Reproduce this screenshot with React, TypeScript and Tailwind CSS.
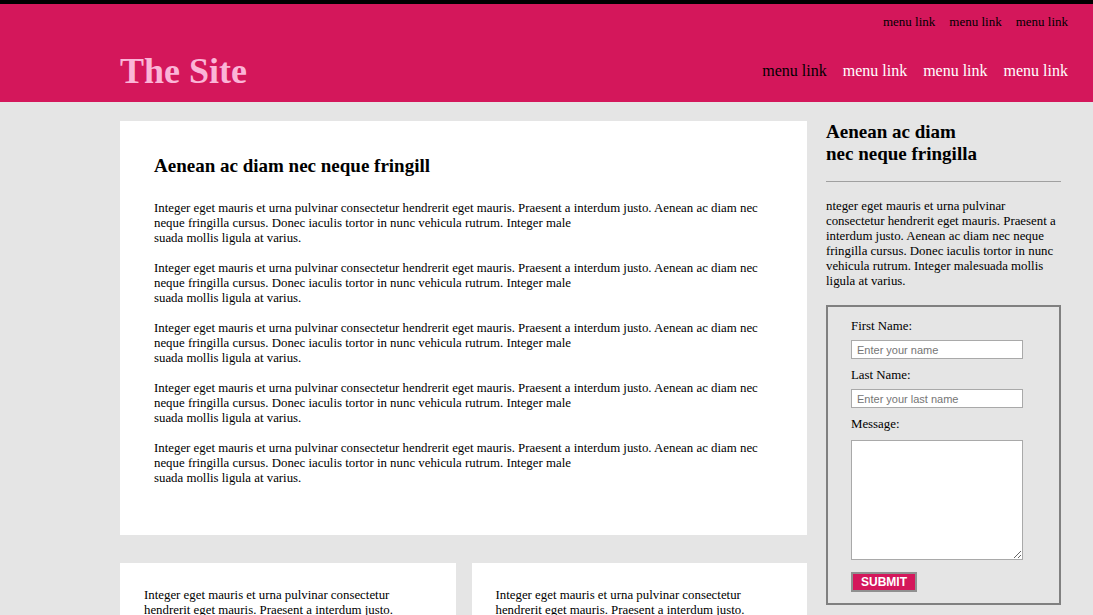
import React from "react";

const para = (
  <p className="mb-[15px]">
    Integer eget mauris et urna pulvinar consectetur hendrerit eget mauris. Praesent a interdum justo. Aenean ac diam nec
    <br />
    neque fringilla cursus. Donec iaculis tortor in nunc vehicula rutrum. Integer male
    <br />
    suada mollis ligula at varius.
  </p>
);

export default function App() {
  return (
    <div className="min-h-[615px] bg-[#e5e5e5] text-black font-['Liberation_Serif',serif]">
      <div className="h-[4px] bg-black" />
      <header className="h-[98px] bg-[#d4175b] pl-[120px] pr-[25px] flex flex-col">
        <nav className="flex justify-end gap-[14px] pt-[6px] text-[13px] leading-[24px]">
          <a>menu link</a>
          <a>menu link</a>
          <a>menu link</a>
        </nav>
        <div className="flex items-center justify-between mt-[17px] h-[40px]">
          <h1 className="text-[36px] leading-[40px] font-bold text-[#fbb5d7]">The Site</h1>
          <nav className="flex gap-[16px] text-[16px] leading-[20px] text-white">
            <a className="text-black">menu link</a>
            <a>menu link</a>
            <a>menu link</a>
            <a>menu link</a>
          </nav>
        </div>
      </header>
      <div className="flex gap-[19px] pl-[120px] pr-[32px] pt-[19px] text-[12.85px] leading-[15px]">
        <main className="w-[687px] flex flex-col gap-[28px]">
          <section className="bg-white px-[34px] pt-[34px] pb-[42px] h-[414px]">
            <h3 className="text-[19px] leading-[22px] font-bold mb-[24px]">Aenean ac diam nec neque fringill</h3>
            {para}
            {para}
            {para}
            {para}
            {para}
          </section>
          <div className="flex gap-[16px]">
            <section className="flex-1 bg-white px-[24px] pt-[25px] h-[100px]">
              <p>
                Integer eget mauris et urna pulvinar consectetur
                <br />
                hendrerit eget mauris. Praesent a interdum justo.
              </p>
            </section>
            <section className="flex-1 bg-white px-[24px] pt-[25px] h-[100px]">
              <p>
                Integer eget mauris et urna pulvinar consectetur
                <br />
                hendrerit eget mauris. Praesent a interdum justo.
              </p>
            </section>
          </div>
        </main>
        <aside className="w-[235px]">
          <h3 className="text-[19px] leading-[22px] font-bold">
            Aenean ac diam
            <br />
            nec neque fringilla
          </h3>
          <hr className="mt-[16px] border-t border-[#a0a0a0]" />
          <p className="mt-[17px]">
            nteger eget mauris et urna pulvinar consectetur hendrerit eget mauris. Praesent a interdum justo. Aenean ac diam nec neque fringilla cursus. Donec iaculis tortor in nunc vehicula rutrum. Integer malesuada mollis ligula at varius.
          </p>
          <form className="mt-[16px] border-2 border-[#808080] pl-[23px] pt-[9px] h-[300px] flex flex-col">
            <label className="leading-[20px]">First Name:</label>
            <input
              placeholder="Enter your name"
              className="mt-[4px] w-[172px] h-[19px] border border-[#a9a9a9] bg-white px-[5px] text-[11px] font-['Liberation_Sans',sans-serif] placeholder:text-[#757575]"
            />
            <label className="mt-[6px] leading-[20px]">Last Name:</label>
            <input
              placeholder="Enter your last name"
              className="mt-[4px] w-[172px] h-[19px] border border-[#a9a9a9] bg-white px-[5px] text-[11px] font-['Liberation_Sans',sans-serif] placeholder:text-[#757575]"
            />
            <label className="mt-[6px] leading-[20px]">Message:</label>
            <textarea className="mt-[6px] w-[172px] h-[120px] border border-[#a9a9a9] bg-white" />
            <button
              type="button"
              className="mt-[12px] w-[66px] h-[20px] bg-[#d4175b] border-2 border-[#909090] text-white font-bold text-[12px] leading-[15px] font-['Liberation_Sans',sans-serif]"
            >
              SUBMIT
            </button>
          </form>
        </aside>
      </div>
    </div>
  );
}
